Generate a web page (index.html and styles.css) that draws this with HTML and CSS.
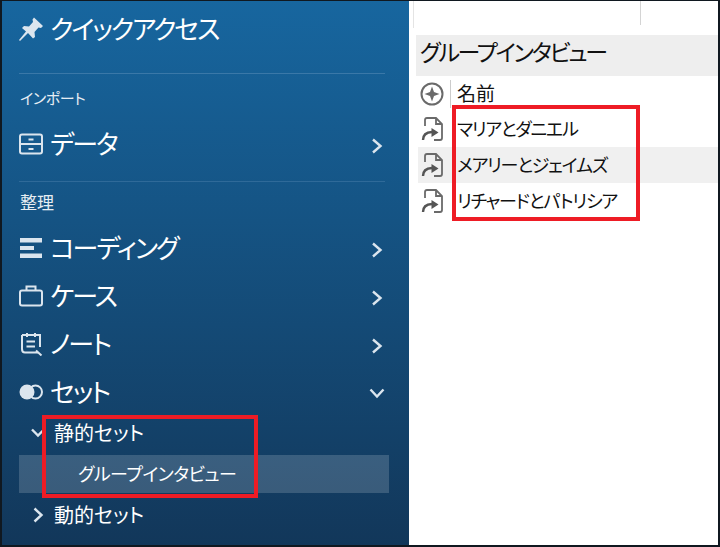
FILE: index.html
```html
<!DOCTYPE html>
<html lang="ja">
<head>
  <meta charset="UTF-8" />
  <title>グループインタビュー</title>
  <link rel="stylesheet" href="styles.css">
</head>
<body>
  <div class="app">
    <aside class="sidebar">
      <div class="quick">
        <svg class="nav-icon" viewBox="0 0 24 24"><path class="solid" d="M15 0.500 L24 9 L22 11 L19.500 10.500 L15.500 15 L16 20 L14 21.500 L9 16 L1 24 L0 23 L7 14.500 L3 11 L5 9 L10 9.500 L14 5 L13.500 2.500 Z"/></svg>
        <span class="nav-label">クイックアクセス</span>
      </div>
      <hr class="rule">
      <div class="group-label import-label">インポート</div>
      <a class="nav-item">
        <svg class="nav-icon" viewBox="0 0 24 24"><rect class="line" x="1" y="2.500" width="22" height="19" rx="2"/><path class="line" d="M1 12 H23"/><path class="line" d="M9.500 7.500 H14.500 M9.500 17 H14.500"/></svg>
        <span class="nav-label">データ</span>
        <svg class="chevron" viewBox="0 0 12 16"><path d="M2 1.500 L9.500 8 L2 14.500"/></svg>
      </a>
      <hr class="rule rule-second">
      <div class="group-label">整理</div>
      <a class="nav-item">
        <svg class="nav-icon" viewBox="0 0 24 24"><path class="solid" d="M1 2 H23 V6.500 H1 Z M1 10 H15 V14 H1 Z M1 17.500 H23 V22 H1 Z"/></svg>
        <span class="nav-label">コーディング</span>
        <svg class="chevron" viewBox="0 0 12 16"><path d="M2 1.500 L9.500 8 L2 14.500"/></svg>
      </a>
      <a class="nav-item">
        <svg class="nav-icon" viewBox="0 0 24 24"><rect class="line" x="1" y="6.500" width="22" height="15" rx="2"/><path class="line" d="M7.500 6.500 V2.500 H16.500 V6.500"/></svg>
        <span class="nav-label">ケース</span>
        <svg class="chevron" viewBox="0 0 12 16"><path d="M2 1.500 L9.500 8 L2 14.500"/></svg>
      </a>
      <a class="nav-item">
        <svg class="nav-icon" viewBox="0 0 24 24"><path class="line" d="M3 3 H21 V15 M19 20.500 H6 Q3 20.500 3 17 V3"/><path class="line" d="M8 1 V5 M16 1 V5 M7.500 9.500 H16 M7.500 14.500 H16 M17 18.500 L22.500 23.500"/></svg>
        <span class="nav-label">ノート</span>
        <svg class="chevron" viewBox="0 0 12 16"><path d="M2 1.500 L9.500 8 L2 14.500"/></svg>
      </a>
      <a class="nav-item">
        <svg class="nav-icon" viewBox="0 0 24 24"><circle class="line" cx="16.500" cy="12" r="6.500"/><circle class="solid" cx="8" cy="12" r="7.500"/></svg>
        <span class="nav-label">セット</span>
        <svg class="chevron chevron-open" viewBox="0 0 16 12"><path d="M1.500 2.500 L8 9.500 L14.500 2.500"/></svg>
      </a>
      <div class="sub-list">
        <a class="sub-item">
          <svg class="sub-chevron" viewBox="0 0 16 12"><path d="M2 2.500 L8 8.500 L14 2.500"/></svg>
          <span>静的セット</span>
        </a>
        <a class="sub-item selected"><span>グループインタビュー</span></a>
        <a class="sub-item">
          <svg class="sub-chevron" viewBox="0 0 12 16"><path d="M2.500 1.500 L9.500 8 L2.500 14.500"/></svg>
          <span>動的セット</span>
        </a>
      </div>
    </aside>

    <main class="content">
      <div class="toolbar"><div class="toolbar-split"></div></div>
      <h2 class="title">グループインタビュー</h2>
      <div class="table-head">
        <span class="cell-icon">
          <svg class="row-icon" viewBox="0 0 24 24"><circle class="head-ring" cx="12" cy="12" r="10.500"/><path class="head-star" d="M12 4.500 L14 10 L19.500 12 L14 14 L12 19.500 L10 14 L4.500 12 L10 10 Z"/></svg>
        </span>
        <span class="head-name">名前</span>
      </div>
      <div class="table-row">
        <span class="cell-icon">
          <svg class="row-icon" viewBox="0 0 24 24"><path class="file" d="M4 9 V3 Q4 1 6 1 H15 L21 7 V21 Q21 23 19 23 H13 M15 1 V7 H21"/><path class="file-tail" d="M2 23 Q2 15.500 11 15"/><path class="file-arrow" d="M10.500 11 L17.500 15.500 L10.500 20 Z"/></svg>
        </span>
        <span class="row-name">マリアとダニエル</span>
      </div>
      <div class="table-row shaded">
        <span class="cell-icon">
          <svg class="row-icon" viewBox="0 0 24 24"><path class="file" d="M4 9 V3 Q4 1 6 1 H15 L21 7 V21 Q21 23 19 23 H13 M15 1 V7 H21"/><path class="file-tail" d="M2 23 Q2 15.500 11 15"/><path class="file-arrow" d="M10.500 11 L17.500 15.500 L10.500 20 Z"/></svg>
        </span>
        <span class="row-name">メアリーとジェイムズ</span>
      </div>
      <div class="table-row">
        <span class="cell-icon">
          <svg class="row-icon" viewBox="0 0 24 24"><path class="file" d="M4 9 V3 Q4 1 6 1 H15 L21 7 V21 Q21 23 19 23 H13 M15 1 V7 H21"/><path class="file-tail" d="M2 23 Q2 15.500 11 15"/><path class="file-arrow" d="M10.500 11 L17.500 15.500 L10.500 20 Z"/></svg>
        </span>
        <span class="row-name">リチャードとパトリシア</span>
      </div>
    </main>
  </div>

  <!-- 赤枠の注釈 -->
  <div class="callout callout-set"></div>
  <div class="callout callout-names"></div>
</body>
</html>
```

FILE: styles.css
```css
:root {
  --frame: #101820;
  --blue-top: #17669f;
  --blue-bottom: #12375a;
  --text-light: #ffffff;
  --icon-light: #dbe5ee;
  --rule: #3a78a8;
  --red: #ee1c25;
  --grey-strip: #eeeeee;
  --shade: #f0f0f0;
  --icon-grey: #6a6a6a;
}

* {
  margin: 0;
  padding: 0;
  box-sizing: border-box;
}

html, body {
  height: 100%;
  overflow: hidden;
}

body {
  font-family: "Noto Sans CJK JP", "Noto Sans", sans-serif;
  font-feature-settings: "palt";
  background-color: var(--frame);
  padding: 1px 2px 2px 2px;
  color: #111;
}

.app {
  display: flex;
  height: 100%;
  background-color: #fff;
}

/* サイドバー */
.sidebar {
  flex: 0 0 407px;
  padding-left: 17px;
  background: linear-gradient(180deg, var(--blue-top), var(--blue-bottom));
  color: var(--text-light);
}

.quick, .nav-item {
  display: flex;
  align-items: center;
  height: 48px;
  padding-right: 24px;
}

.quick {
  height: 56px;
}

.nav-icon {
  flex: 0 0 24px;
  width: 24px;
  height: 24px;
  margin-right: 7px;
}

.nav-label {
  flex: 1;
  padding-bottom: 4px;
  font-size: 26px;
  letter-spacing: -2px;
}

.solid {
  fill: var(--icon-light);
}

.line {
  fill: none;
  stroke: var(--icon-light);
  stroke-width: 2;
}

.chevron {
  flex: 0 0 16px;
  width: 16px;
  height: 16px;
  margin-top: 4px;
}

.chevron-open {
  margin-top: 2px;
}

.chevron path, .sub-chevron path {
  fill: none;
  stroke: var(--icon-light);
  stroke-width: 2.4;
}

.rule {
  border: 0;
  height: 1px;
  width: 366px;
  margin-top: 16px;
  background-color: var(--rule);
}

.rule-second {
  margin-top: 13px;
  background-color: #2f6a99;
}

.group-label {
  height: 36px;
  margin: 2px 0 4px;
  padding-left: 1px;
  font-size: 17px;
  line-height: 36px;
  color: #e6edf3;
}

.import-label {
  margin-top: 6px;
  font-size: 15px;
  letter-spacing: -0.4px;
}

.sub-list {
  display: flex;
  flex-direction: column;
  gap: 3px;
  margin-top: -2px;
  font-size: 20px;
}

.sub-item {
  display: flex;
  align-items: center;
  width: 370px;
  height: 38px;
  padding-left: 11px;
}

.sub-item span {
  padding-bottom: 2px;
}

.sub-chevron {
  flex: 0 0 16px;
  width: 16px;
  height: 16px;
  margin-right: 8px;
}

.selected {
  padding-left: 59px;
  font-size: 18px;
  letter-spacing: -0.5px;
  background-color: rgba(255, 255, 255, 0.17);
}

/* 右側のパネル */
.content {
  flex: 1;
  margin-left: 4px;
  min-width: 0;
}

.toolbar {
  height: 27px;
  border-left: 1px solid #e4e4e4;
}

.toolbar-split {
  width: 1px;
  height: 24px;
  margin-left: 226px;
  background-color: #d4d4d4;
}

.title {
  height: 41px;
  margin-top: 7px;
  margin-left: 3px;
  padding-left: 4px;
  font-size: 23px;
  font-weight: 400;
  letter-spacing: -2.3px;
  line-height: 33px;
  background-color: var(--grey-strip);
}

.table-head, .table-row {
  display: flex;
  align-items: center;
  height: 36px;
  margin-left: 5px;
}

.table-head {
  height: 35px;
}

.cell-icon {
  display: flex;
  justify-content: center;
  align-items: center;
  flex: 0 0 33px;
  height: 100%;
  padding-right: 4px;
}

.table-head .cell-icon {
  height: 28px;
  border-right: 1px solid #cccccc;
}

.row-icon {
  width: 24px;
  height: 24px;
}

.head-ring {
  fill: none;
  stroke: var(--icon-grey);
  stroke-width: 2;
}

.head-star {
  fill: var(--icon-grey);
}

.file {
  fill: none;
  stroke: var(--icon-grey);
  stroke-width: 1.8;
}

.file-tail {
  fill: none;
  stroke: #555;
  stroke-width: 2.4;
}

.file-arrow {
  fill: #555;
}

.head-name {
  margin-left: 6px;
  padding-bottom: 2px;
  font-size: 19px;
}

.row-name {
  margin-left: 6px;
  padding-bottom: 2px;
  font-size: 18px;
  letter-spacing: -1.2px;
}

.shaded {
  background-color: var(--shade);
}

/* 注釈は画面の上に重ねる */
.callout {
  position: absolute;
  border: 4px solid var(--red);
}

.callout-set {
  left: 42px;
  top: 415px;
  width: 216px;
  height: 83px;
}

.callout-names {
  left: 452px;
  top: 105px;
  width: 188px;
  height: 116px;
}
```
